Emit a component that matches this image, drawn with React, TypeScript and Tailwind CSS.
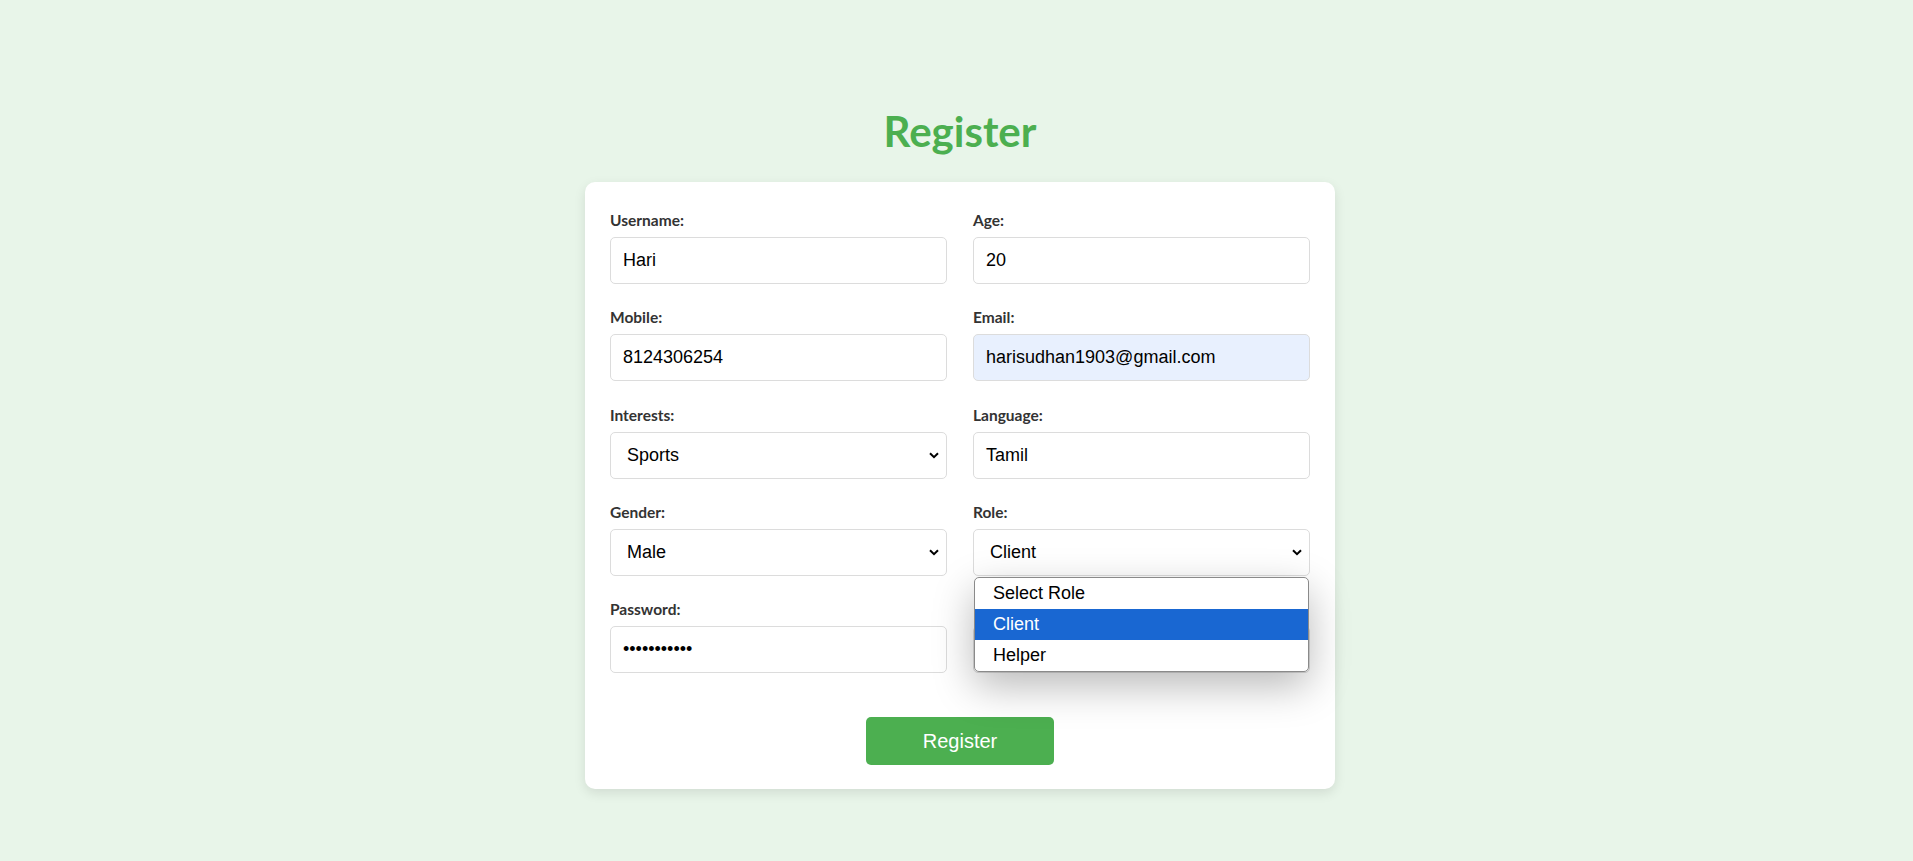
import React from "react";

const labelCls =
  "block text-[15.5px] leading-[18px] font-bold text-[#333333] mb-[8px] font-['Lato',sans-serif]";
const boxCls =
  "h-[47px] border border-[#dcdcdc] rounded-[5px] flex items-center font-['Liberation_Sans',Arial,sans-serif] text-[18px] text-black";

function Chevron() {
  return (
    <svg width="10" height="7" viewBox="0 0 10 7" className="shrink-0">
      <path d="M1 1.2 L5 5.2 L9 1.2" fill="none" stroke="#000" strokeWidth="2" />
    </svg>
  );
}

function TextField({ label, value, bg }: { label: string; value: string; bg?: string }) {
  return (
    <div>
      <div className={labelCls}>{label}</div>
      <div className={`${boxCls} px-[12px] ${bg ?? "bg-white"}`}>{value}</div>
    </div>
  );
}

function SelectField({ label, value }: { label: string; value: string }) {
  return (
    <div>
      <div className={labelCls}>{label}</div>
      <div className={`${boxCls} bg-white pl-[16px] pr-[7px] justify-between`}>
        <span>{value}</span>
        <Chevron />
      </div>
    </div>
  );
}

export default function App() {
  return (
    <div className="min-h-screen bg-[#e8f5e9] pl-[7px] pt-[107px] flex flex-col items-center font-['Lato',sans-serif]">
      <h2 className="text-[42px] leading-[48px] font-bold text-[#4caf50] mb-[27px]">Register</h2>
      <div className="w-[750px] bg-white rounded-[10px] shadow-[0_4px_12px_rgba(0,0,0,0.1)] pt-[29px] px-[25px] pb-[24px]">
        <div className="grid grid-cols-2 gap-x-[26px] gap-y-[24.25px]">
          <TextField label="Username:" value="Hari" />
          <TextField label="Age:" value="20" />
          <TextField label="Mobile:" value="8124306254" />
          <TextField label="Email:" value="harisudhan1903@gmail.com" bg="bg-[#e8f0fe]" />
          <SelectField label="Interests:" value="Sports" />
          <TextField label="Language:" value="Tamil" />
          <SelectField label="Gender:" value="Male" />
          <div className="relative">
            <SelectField label="Role:" value="Client" />
            <div className="absolute left-[1px] right-[1px] top-[74px] z-10 bg-white border border-[#8a8a8a] rounded-[5px] overflow-hidden shadow-[0_14px_40px_rgba(0,0,0,0.28)] font-['Liberation_Sans',Arial,sans-serif] text-[18px]">
              <div className="h-[31px] flex items-center pl-[18px] text-black">Select Role</div>
              <div className="h-[31px] flex items-center pl-[18px] bg-[#1967d2] text-white">Client</div>
              <div className="h-[31px] flex items-center pl-[18px] text-black">Helper</div>
            </div>
          </div>
          <TextField label="Password:" value="•••••••••••" />
          <div>
            <div className="h-[18px] mb-[8px]" />
            <div className={`${boxCls} bg-white`} />
          </div>
        </div>
        <div className="flex justify-center mt-[44px]">
          <button className="w-[188px] h-[48px] rounded-[5px] bg-[#4caf50] text-white text-[20px] font-['Liberation_Sans',Arial,sans-serif]">
            Register
          </button>
        </div>
      </div>
    </div>
  );
}
